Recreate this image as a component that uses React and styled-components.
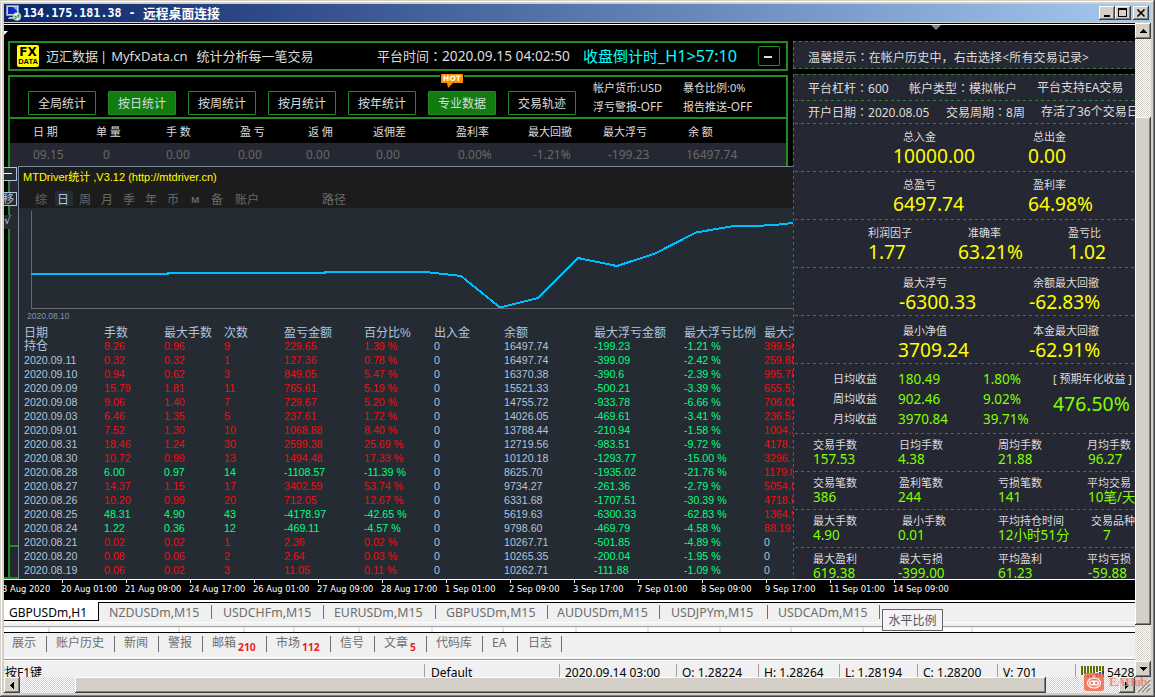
import React from "react";
import styled, { createGlobalStyle, css } from "styled-components";

const tabs = [
  ["NZDUSDm,M15", 112, 10],
  ["USDCHFm,M15", 112, 11],
  ["EURUSDm,M15", 112, 10],
  ["GBPUSDm,M15", 112, 10],
  ["AUDUSDm,M15", 112, 9],
  ["USDJPYm,M15", 108, 11],
  ["USDCADm,M15", 112, 10],
];

const terminalTabs = [
  ["展示", 43, 8],
  ["账户历史", 68, 9],
  ["新闻", 44, 9],
  ["警报", 44, 9],
  ["邮箱", 64, 9, "210"],
  ["市场", 64, 9, "112"],
  ["信号", 44, 9],
  ["文章", 52, 9, "5"],
  ["代码库", 56, 9],
  ["EA", 35, 9],
  ["日志", 44, 10],
];

const statusCells = [
  ["Default", 135],
  ["2020.09.14 03:00", 117],
  ["O: 1.28224", 82],
  ["H: 1.28264", 81],
  ["L: 1.28194", 78],
  ["C: 1.28200", 80],
  ["V: 701", 78],
];

const times = [
  "20 Aug 01:00", "21 Aug 09:00", "24 Aug 17:00", "26 Aug 01:00", "27 Aug 09:00",
  "28 Aug 17:00", "1 Sep 01:00", "2 Sep 09:00", "3 Sep 17:00", "7 Sep 01:00",
  "8 Sep 09:00", "9 Sep 17:00", "11 Sep 01:00", "14 Sep 09:00",
];

const buttons = ["全局统计", "按日统计", "按周统计", "按月统计", "按年统计", "专业数据", "交易轨迹"];
const activeButtons = ["按日统计", "专业数据"];

const summaryHead = ["日 期", "单 量", "手 数", "盈 亏", "返 佣", "返佣差", "盈利率", "最大回撤", "最大浮亏", "余 额"];
const summaryRow = ["09.15", "0", "0.00", "0.00", "0.00", "0.00", "0.00%", "-1.21%", "-199.23", "16497.74"];

const historyHead = ["日期", "手数", "最大手数", "次数", "盈亏金额", "百分比%", "出入金", "余额", "最大浮亏金额", "最大浮亏比例", "最大浮盈金额"];
const history = [
  ["持仓", "8.26", "0.96", "9", "229.65", "1.39 %", "0", "16497.74", "-199.23", "-1.21 %", "399.56"],
  ["2020.09.11", "0.32", "0.32", "1", "127.36", "0.78 %", "0", "16497.74", "-399.09", "-2.42 %", "259.88"],
  ["2020.09.10", "0.94", "0.62", "3", "849.05", "5.47 %", "0", "16370.38", "-390.6", "-2.39 %", "995.78"],
  ["2020.09.09", "15.79", "1.81", "11", "765.61", "5.19 %", "0", "15521.33", "-500.21", "-3.39 %", "655.51"],
  ["2020.09.08", "9.06", "1.40", "7", "729.67", "5.20 %", "0", "14755.72", "-933.78", "-6.66 %", "706.08"],
  ["2020.09.03", "6.46", "1.35", "5", "237.61", "1.72 %", "0", "14026.05", "-469.61", "-3.41 %", "236.52"],
  ["2020.09.01", "7.52", "1.30", "10", "1068.88", "8.40 %", "0", "13788.44", "-210.94", "-1.58 %", "1004.20"],
  ["2020.08.31", "18.46", "1.24", "30", "2599.38", "25.69 %", "0", "12719.56", "-983.51", "-9.72 %", "4178.10"],
  ["2020.08.30", "10.72", "0.99", "13", "1494.48", "17.33 %", "0", "10120.18", "-1293.77", "-15.00 %", "3296.15"],
  ["2020.08.28", "6.00", "0.97", "14", "-1108.57", "-11.39 %", "0", "8625.70", "-1935.02", "-21.76 %", "1179.04"],
  ["2020.08.27", "14.37", "1.15", "17", "3402.59", "53.74 %", "0", "9734.27", "-261.36", "-2.79 %", "5054.66"],
  ["2020.08.26", "10.20", "0.99", "20", "712.05", "12.67 %", "0", "6331.68", "-1707.51", "-30.39 %", "4718.00"],
  ["2020.08.25", "48.31", "4.90", "43", "-4178.97", "-42.65 %", "0", "5619.63", "-6300.33", "-62.83 %", "1364.99"],
  ["2020.08.24", "1.22", "0.36", "12", "-469.11", "-4.57 %", "0", "9798.60", "-469.79", "-4.58 %", "88.19"],
  ["2020.08.21", "0.02", "0.02", "1", "2.36", "0.02 %", "0", "10267.71", "-501.85", "-4.89 %", "0"],
  ["2020.08.20", "0.08", "0.06", "2", "2.64", "0.03 %", "0", "10265.35", "-200.04", "-1.95 %", "0"],
  ["2020.08.19", "0.06", "0.02", "3", "11.05", "0.11 %", "0", "10262.71", "-111.88", "-1.09 %", "0"],
];

const RED = "#f70a0e";
const GREEN = "#00ff7f";
const STEEL = "#b0c4de";

// profit columns follow the sign of the day, drawdown columns are always green
function cellColor(row, i) {
  if (i >= 1 && i <= 5) return row[4].startsWith("-") ? GREEN : RED;
  if (i === 8 || i === 9) return GREEN;
  if (i === 10) return row[10] === "0" ? STEEL : RED;
  return STEEL;
}

// [left padding, widths, texts] for the label line and the value line
const bigStats = [
  { labels: [109, [130], ["总入金", "总出金"]], values: [99, [135], ["10000.00", "0.00"]] },
  { labels: [109, [130], ["总盈亏", "盈利率"]], values: [99, [135], ["6497.74", "64.98%"]] },
  { labels: [74, [100, 100], ["利润因子", "准确率", "盈亏比"]], values: [74, [90, 110], ["1.77", "63.21%", "1.02"]] },
  { low: true, labels: [109, [130], ["最大浮亏", "余额最大回撤"]], values: [105, [130], ["-6300.33", "-62.83%"]] },
  { low: true, labels: [109, [130], ["最小净值", "本金最大回撤"]], values: [104, [131], ["3709.24", "-62.91%"]] },
];

const averages = [
  ["日均收益", "180.49", "1.80%"],
  ["周均收益", "902.46", "9.02%"],
  ["月均收益", "3970.84", "39.71%"],
];

const smallStats = [
  { labels: [19, [86, 99, 89], ["交易手数", "日均手数", "周均手数", "月均手数"]], values: ["157.53", "4.38", "21.88", "96.27"] },
  { labels: [19, [86, 99, 89], ["交易笔数", "盈利笔数", "亏损笔数", "平均交易"]], values: ["386", "244", "141", "10笔/天"] },
  { labels: [19, [89, 96, 93], ["最大手数", "最小手数", "平均持仓时间", "交易品种"]], values: ["4.90", "0.01", "12小时51分", "7"], shift: 15 },
  { labels: [19, [86, 99, 89], ["最大盈利", "最大亏损", "平均盈利", "平均亏损"]], values: ["619.38", "-399.00", "61.23", "-59.88"] },
];

function Arrow({ dir }) {
  const points = { up: "0,4 7,4 3.5,0", down: "0,0 7,0 3.5,4", left: "4,0 4,7 0,3.5", right: "0,0 0,7 4,3.5" };
  const flat = dir === "up" || dir === "down";
  return (
    <svg width={flat ? 7 : 4} height={flat ? 4 : 7} shapeRendering="crispEdges">
      <polygon points={points[dir]} fill="#000" />
    </svg>
  );
}

function StatLine({ as: Line, data }) {
  const [pad, widths, texts] = data;
  return (
    <Line $pad={pad} $widths={widths}>
      {texts.map((t, i) => (
        <span key={i}>{t}</span>
      ))}
    </Line>
  );
}

// name and value joined by a centred full-width colon
function Pair({ name, children }) {
  return (
    <span>
      {name}
      <Colon>：</Colon>
      {children}
    </span>
  );
}

function TitleBar() {
  return (
    <TitleRow>
      <svg width="17" height="18" viewBox="0 0 17 18">
        <rect x="1.5" y="1.5" width="12" height="10" fill="#c9cdd8" stroke="#8f96a8" />
        <rect x="3" y="3" width="9" height="7" fill="#0a2bc8" />
        <path d="M8 3h4v4z" fill="#7fa6ff" />
        <path d="M4 13h7v2H3z" fill="#b5b9c4" />
        <circle cx="12" cy="12.5" r="4" fill="#e7efe6" stroke="#9aa79a" strokeWidth=".6" />
        <path d="M9.5 12l2 1.5-2 1.5M14.5 10.5l-2 1.5 2 1.5" fill="none" stroke="#1d9a2a" strokeWidth="1.2" />
      </svg>
      <HostText>134.175.181.38 - </HostText>
      <TitleText>远程桌面连接</TitleText>
      <WindowButtons>
        <CaptionButton>
          <svg width="10" height="10" shapeRendering="crispEdges"><rect x="2" y="7" width="6" height="2" /></svg>
        </CaptionButton>
        <CaptionButton>
          <svg width="10" height="10" shapeRendering="crispEdges">
            <path d="M0 0h9v9H0zM1 2v6h7V2z" fillRule="evenodd" />
          </svg>
        </CaptionButton>
        <CaptionButton $gap>
          <svg width="10" height="10"><path d="M1.5 1.5l7 7M8.5 1.5l-7 7" stroke="#000" strokeWidth="1.6" /></svg>
        </CaptionButton>
      </WindowButtons>
    </TitleRow>
  );
}

function Summary() {
  return (
    <SummaryBox>
      <HotBadge>
        HOT
        <svg width="6" height="5"><path d="M0 0h6L1 5z" fill="#ff8a00" /></svg>
      </HotBadge>
      <ButtonRow>
        {buttons.map((b) => (
          <StatButton key={b} $active={activeButtons.includes(b)}>{b}</StatButton>
        ))}
        <AccountInfo>
          <span>帐户货币:USD</span>
          <span>暴仓比例:0%</span>
          <span>浮亏警报<em>-OFF</em></span>
          <span>报告推送<em>-OFF</em></span>
        </AccountInfo>
      </ButtonRow>
      <SummaryHead>{summaryHead.map((h) => <span key={h}>{h}</span>)}</SummaryHead>
      <SummaryValues>{summaryRow.map((v, i) => <span key={i}>{v}</span>)}</SummaryValues>
    </SummaryBox>
  );
}

function Driver() {
  return (
    <DriverRow>
      <DriverSide>
        <SideButton $top={1}><i /></SideButton>
        <SideButton $top={26}>移</SideButton>
        <SideButton $top={49} $plain>√</SideButton>
        <SideLine />
      </DriverSide>
      <DriverPanel>
        <DriverTop>
          <DriverTitle>MTDriver统计 ,V3.12 (http://mtdriver.cn)</DriverTitle>
          <PeriodRow>
            <span>综</span>
            <span className="on">日</span>
            <span>周</span>
            <span>月</span>
            <span>季</span>
            <span>年</span>
            <span>币</span>
            <span className="m">M</span>
            <span>备</span>
            <span>账户</span>
            <span>路径</span>
          </PeriodRow>
        </DriverTop>
        <Curve width="774" height="102" viewBox="19 208 774 102">
          <path d="M31.5 211V308.5H793" fill="none" stroke="#696969" />
          <path
            d="M31 274H168V273H325V272H426L461 276L500 307.5L538 298L578 258L617 266L655 253.5L696 232.5L732 226.3L753 226L775 225L793 223"
            fill="none"
            stroke="#00bfff"
            strokeWidth="2"
          />
        </Curve>
        <StartDate>2020.08.10</StartDate>
        <HistoryHead>{historyHead.map((h) => <span key={h}>{h}</span>)}</HistoryHead>
        {history.map((row) => (
          <HistoryRow key={row[0]}>
            {row.map((v, i) => <HistoryCell key={i} $color={cellColor(row, i)}>{v}</HistoryCell>)}
          </HistoryRow>
        ))}
      </DriverPanel>
    </DriverRow>
  );
}

function AccountPanel() {
  return (
    <RightColumn>
      <Notice>
        <Pair name="温馨提示">在帐户历史中，右击选择&lt;所有交易记录&gt;</Pair>
      </Notice>
      <Account>
        <InfoLine $height={26} $widths={[101, 128]}>
          <Pair name="平台杠杆">600</Pair>
          <Pair name="帐户类型">模拟帐户</Pair>
          <span>平台支持EA交易</span>
        </InfoLine>
        <InfoLine $height={23} $widths={[138, 95]}>
          <Pair name="开户日期">2020.08.05</Pair>
          <Pair name="交易周期">8周</Pair>
          <span>存活了36个交易日</span>
        </InfoLine>
        {bigStats.map((s, i) => (
          <BigSection key={i} $low={s.low}>
            <StatLine as={LabelLine} data={s.labels} />
            <StatLine as={BigLine} data={s.values} />
          </BigSection>
        ))}
        <AverageSection>
          <div>
            {averages.map(([name, money, pct]) => (
              <AverageRow key={name}>
                <b>{name}</b>
                <span>{money}</span>
                <span>{pct}</span>
              </AverageRow>
            ))}
          </div>
          <Forecast>
            <b>[ 预期年化收益 ]</b>
            <span>476.50%</span>
          </Forecast>
        </AverageSection>
        {smallStats.map((s, i) => (
          <SmallSection key={i}>
            <StatLine as={SmallLabelLine} data={s.labels} />
            <StatLine as={SmallValueLine} data={[19, [85, 100, 90 + (s.shift || 0)], s.values]} />
          </SmallSection>
        ))}
      </Account>
    </RightColumn>
  );
}

function App() {
  return (
    <Window>
      <GlobalStyle />
      <TitleBar />
      <Main>
        <Screen>
          <ChartArea>
            <LeftColumn>
              <TopStrip>
                <svg width="4" height="4"><path d="M0 0h4L0 4z" fill="#fff" /></svg>
              </TopStrip>
              <Header>
                <Logo>
                  <b>FX</b>
                  <span>DATA</span>
                </Logo>
                <Brand>迈汇数据</Brand>
                <Brand $left={2}>|</Brand>
                <Brand $left={4}>MyfxData.cn</Brand>
                <Brand $left={9}>统计分析每一笔交易</Brand>
                <Clock>
                  <Pair name="平台时间"><em>2020.09.15 04:02:50</em></Pair>
                </Clock>
                <Countdown>收盘倒计时<em>_H1&gt;57:10</em></Countdown>
                <MinusButton />
              </Header>
              <Summary />
              <Driver />
            </LeftColumn>
            <AccountPanel />
          </ChartArea>
          <TimeAxis>
            <FirstTime>3 Aug 2020</FirstTime>
            {times.map((t) => <TimeMark key={t}>{t}</TimeMark>)}
          </TimeAxis>
          <SymbolTabs>
            <ActiveTab>GBPUSDm,H1</ActiveTab>
            {tabs.map(([name, width, pad], i) => (
              <SymbolTab key={name} $width={i === 0 ? width + 1 : width} $pad={pad}>{name}</SymbolTab>
            ))}
            <Tooltip>水平比例</Tooltip>
          </SymbolTabs>
          <CellStrip>
            {[46, 130, 65, 50, 65, 73, 71, 73, 72, 72, 71, 72, 109].map((w, i) => <StripCell key={i} $width={w} />)}
          </CellStrip>
          <TerminalTabs>
            {terminalTabs.map(([name, width, pad, count]) => (
              <TerminalTab key={name} $width={width} $pad={pad}>
                {name}
                {count && <b>{count}</b>}
              </TerminalTab>
            ))}
          </TerminalTabs>
          <StatusBar>
            <HelpText>请按F1键</HelpText>
            {statusCells.map(([text, width], i) => (
              <StatusCell key={text} $width={width} $pad={i === 0 ? 7 : 6}>{text}</StatusCell>
            ))}
            <StatusCell $width={60} $pad={7}>
              <svg width="24" height="12" shapeRendering="crispEdges">
                {[0, 3, 6, 9, 12, 15, 18, 21].map((x, i) => (
                  <g key={x}>
                    <rect x={x} y="0" width="2" height={9 - i * 0.6} fill="#5a7300" />
                    <rect x={x} y={11 - i * 0.8} width="2" height="6" fill="#123f66" />
                  </g>
                ))}
              </svg>
              5428
            </StatusCell>
          </StatusBar>
        </Screen>
        <VerticalScroll>
          <ScrollButton><Arrow dir="up" /></ScrollButton>
          <Thumb $top={78} $height={508} />
          <ScrollButton><Arrow dir="down" /></ScrollButton>
        </VerticalScroll>
      </Main>
      <HorizontalScroll>
        <ScrollButton><Arrow dir="left" /></ScrollButton>
        <Thumb $left={55} $width={971} />
        <ScrollButton><Arrow dir="right" /></ScrollButton>
        <Grip width="16" height="16">
          <path d="M3 15L15 3M7 15l8-8M11 15l4-4" stroke="#808080" strokeWidth="1.6" />
          <path d="M1.5 15L15 1.5M5.5 15L15 5.5M9.5 15L15 9.5" stroke="#fff" />
        </Grip>
      </HorizontalScroll>
      <Watermark>
        <svg width="20" height="20" viewBox="0 0 20 20">
          <rect x="0" y="1" width="20" height="18" rx="3" fill="#f5694f" />
          <path d="M10 5.500V3" stroke="#fff" strokeWidth="1.300" />
          <ellipse cx="10" cy="11" rx="6.500" ry="5" fill="none" stroke="#fff" strokeWidth="1.200" />
          <rect x="5" y="8.500" width="10" height="5" rx="2.500" fill="#fff" />
          <circle cx="7.700" cy="11" r="1.300" fill="#f5694f" />
          <circle cx="12.300" cy="11" r="1.300" fill="#f5694f" />
        </svg>
        EAHub
      </Watermark>
    </Window>
  );
}

export default App;

const GlobalStyle = createGlobalStyle`
  * {
    box-sizing: border-box;
  }

  body {
    margin: 0;
    overflow: hidden;
    font-family: "Noto Sans", "Noto Sans CJK SC", sans-serif;
  }

  svg {
    display: block;
    flex: none;
  }

  em, i {
    font-style: normal;
  }
`;

const panel = "#252732";
const arial = `"Liberation Sans", "Noto Sans CJK SC", sans-serif`;
const px = (widths) => widths.map((w) => `${w}px`).join(" ") + " auto";

const dashX = `repeating-linear-gradient(90deg, #228b22 0 3px, transparent 3px 6px)`;
const dashY = `repeating-linear-gradient(180deg, #228b22 0 3px, transparent 3px 6px)`;

const bevel = css`
  background: #d4d0c8;
  box-shadow: inset -1px -1px #404040, inset 1px 1px #fff, inset -2px -2px #808080;
`;

const Colon = styled.span`
  font-family: "Noto Sans CJK TC", sans-serif;
`;

const Window = styled.div`
  position: relative;
  width: 1155px;
  height: 697px;
  padding: 4px;
  background: #d4d0c8;
  box-shadow: inset -1px -1px #404040, inset 0 1px #d4d0c8, inset 1px 0 #d4d0c8, inset -2px -2px #808080, inset 2px 2px #fff;
  display: flex;
  flex-direction: column;
  overflow: hidden;
  white-space: nowrap;
`;

const TitleRow = styled.div`
  height: 18px;
  display: flex;
  align-items: center;
  padding-left: 1px;
  background: linear-gradient(90deg, #0a246a, #a6caf0);
  color: #fff;
  font-weight: bold;
`;

const HostText = styled.span`
  margin-left: 1px;
  width: 120px;
  font-family: "DejaVu Sans Mono", monospace;
  font-size: 11.7px;
  line-height: 18px;
`;

const TitleText = styled.span`
  font-family: "Noto Sans CJK SC", sans-serif;
  font-size: 12.8px;
  line-height: 18px;
`;

const WindowButtons = styled.div`
  display: flex;
  margin-left: auto;
  padding-right: 2px;
`;

const CaptionButton = styled.div`
  ${bevel}
  width: 16px;
  height: 14px;
  margin-left: ${(p) => (p.$gap ? 2 : 0)}px;
  padding: 2px 0 0 3px;
`;

const Main = styled.div`
  display: flex;
  height: 655px;
`;

const Screen = styled.div`
  width: 1131px;
  margin-top: 1px;
  border-top: 1px solid #000;
  overflow: hidden;
`;

const ChartArea = styled.div`
  display: flex;
  height: 555px;
  border-top: 1px solid #fff;
  background: #000;
`;

const LeftColumn = styled.div`
  width: 789px;
`;

const TopStrip = styled.div`
  height: 16px;
  padding-top: 6px;
`;

const Header = styled.div`
  height: 30px;
  width: 780px;
  margin-left: 4px;
  padding-left: 7px;
  display: flex;
  align-items: center;
  border: 2px solid #228b22;
  color: #dcdcdc;
  line-height: 24px;
`;

const Logo = styled.div`
  width: 22px;
  height: 22px;
  border-radius: 2px;
  background: #ffff00;
  color: #000;
  text-align: center;
  overflow: hidden;

  b,
  span {
    display: block;
    font-weight: bold;
  }

  b {
    font: bold 12px/12px "DejaVu Sans", sans-serif;
    margin-top: 1px;
  }

  span {
    font: bold 7.5px/7px "Liberation Sans", sans-serif;
  }
`;

const Brand = styled.span`
  margin-left: ${(p) => p.$left || 7}px;
  font-size: 13px;
`;

const Clock = styled.span`
  width: 206px;
  margin-left: auto;
  font-size: 13px;

  em {
    font-size: 13.7px;
  }
`;

const Countdown = styled.span`
  width: 175px;
  color: #00ffff;
  font-size: 15px;

  em {
    font-size: 16.2px;
  }
`;

const MinusButton = styled.div`
  width: 22px;
  height: 20px;
  margin-right: 6px;
  padding: 9px 0 0 5px;
  border: 1px solid #228b22;
  border-radius: 1px;

  &::before {
    content: "";
    display: block;
    width: 8px;
    height: 2px;
    background: #dcdcdc;
  }
`;

const SummaryBox = styled.div`
  position: relative;
  width: 780px;
  height: 91px;
  margin: 4px 0 0 4px;
  border: 2px solid #228b22;
  border-bottom: none;
`;

const HotBadge = styled.div`
  position: absolute;
  left: 431px;
  top: -3px;
  width: 22px;
  height: 9px;
  background: #ff9000;
  box-shadow: 0 0 0 1px #000;
  border-radius: 1px;
  color: #fff;
  font: bold 7.5px/9px "DejaVu Sans", sans-serif;
  text-align: center;

  svg {
    margin-left: 6px;
  }
`;

const ButtonRow = styled.div`
  display: flex;
  gap: 12px;
  height: 42px;
  padding: 14px 0 0 18px;
  border-bottom: 2px solid #228b22;
`;

const StatButton = styled.div`
  flex: none;
  width: 68px;
  height: 24px;
  border: 1px solid #228b22;
  border-radius: 1px;
  background: ${(p) => (p.$active ? "#107c10" : "#000")};
  color: #dcdcdc;
  font-size: 12px;
  line-height: 23px;
  text-align: center;
`;

const AccountInfo = styled.div`
  display: grid;
  grid-template-columns: 90px auto;
  margin: -12px 0 0 5px;
  color: #dcdcdc;
  font-size: 11px;
  line-height: 18px;
  height: 36px;

  em {
    font-size: 11.8px;
  }
`;

const SummaryHead = styled.div`
  display: grid;
  grid-template-columns: ${px([63, 70, 74, 68, 65, 83, 72, 75, 85])};
  height: 24px;
  padding-left: 23px;
  color: #dcdcdc;
  font-size: 11px;
  line-height: 25px;
`;

const SummaryValues = styled.div`
  display: grid;
  grid-template-columns: ${px([70, 63, 72, 68, 70, 82, 75, 75, 78])};
  height: 23px;
  padding-left: 23px;
  background: ${panel};
  color: #696969;
  font-size: 12px;
  line-height: 23px;
`;

const DriverRow = styled.div`
  display: flex;
  height: 413px;
`;

const DriverSide = styled.div`
  position: relative;
  width: 14px;
  padding-left: 6px;
  background: linear-gradient(90deg, #000 4px, #228b22 4px 6px, ${panel} 6px);
  border-bottom: 2px solid #228b22;
  overflow: hidden;
`;

// controls of the hidden half of the panel, stacked over the frame line
const SideButton = styled.div`
  position: absolute;
  left: -3px;
  top: ${(p) => p.$top}px;
  width: 16px;
  height: 14px;
  padding-left: ${(p) => (p.$plain ? 3 : 1)}px;
  border: ${(p) => (p.$plain ? "none" : `1px solid ${STEEL}`)};
  background: #252b33;
  color: ${STEEL};
  font-family: ${(p) => (p.$plain ? `"DejaVu Sans", sans-serif` : "inherit")};
  font-size: 11px;
  line-height: 12px;

  i {
    display: block;
    width: 9px;
    height: 1px;
    margin-top: 5px;
    background: #fff;
  }
`;

const SideLine = styled.div`
  position: absolute;
  left: 4px;
  right: 0;
  top: 379px;
  height: 2px;
  background: #228b22;
`;

const DriverPanel = styled.div`
  width: 775px;
  border: 1px solid #778899;
  border-right: none;
  border-bottom: none;
  background: #252b33;
  overflow: hidden;
`;

const DriverTop = styled.div`
  height: 41px;
  background: #1c1c1c;
`;

const DriverTitle = styled.div`
  padding: 1px 0 0 4px;
  height: 24px;
  color: #ffff00;
  font-family: ${arial};
  font-size: 11px;
  line-height: 19px;
`;

const PeriodRow = styled.div`
  display: flex;
  height: 15px;
  padding-left: 14px;
  color: #696969;
  font-size: 12px;
  line-height: 17px;

  span {
    width: 22px;
    padding-left: 2px;
  }

  .on {
    width: 18px;
    margin-right: 4px;
    background: #252b33;
    color: ${STEEL};
    padding-left: 2px;
  }

  .m {
    font-size: 9px;
    padding-left: 4px;
    font-weight: bold;
  }

  span:nth-child(10) {
    margin-left: 2px;
    width: 87px;
  }
`;

const Curve = styled.svg`
  shape-rendering: crispEdges;
`;

const StartDate = styled.div`
  height: 15px;
  padding-left: 8px;
  color: #8494a6;
  font-family: ${arial};
  font-size: 8.5px;
  line-height: 12px;
`;

const historyGrid = css`
  display: grid;
  grid-template-columns: ${px([80, 60, 60, 60, 80, 70, 70, 90, 90, 80])};
  padding-left: 5px;
  font-family: ${arial};
`;

const HistoryHead = styled.div`
  ${historyGrid}
  height: 14px;
  color: ${STEEL};
  font-size: 12px;
  line-height: 16px;
`;

const HistoryRow = styled.div`
  ${historyGrid}
  height: 14px;
  font-size: 10.67px;
  line-height: 14px;

  &:nth-of-type(4) span:first-child {
    font-size: 12px;
  }
`;

const HistoryCell = styled.span`
  color: ${(p) => p.$color};
`;

const RightColumn = styled.div`
  width: 342px;
  padding-top: 16px;
  background: #000;
  position: relative;
  overflow: hidden;

  &::before {
    content: "";
    position: absolute;
    left: 138px;
    top: 0;
    border: 5px solid transparent;
    border-top-color: #778899;
    border-bottom: none;
  }
`;

const Notice = styled.div`
  height: 28px;
  padding-left: 15px;
  background: ${dashX} 0 0 / 100% 1px no-repeat, ${dashX} 0 100% / 100% 1px no-repeat, ${dashY} 0 0 / 1px 100% no-repeat, ${panel};
  color: #dcdcdc;
  font-size: 12px;
  letter-spacing: 0.14px;
  line-height: 31px;
`;

const Account = styled.div`
  height: 505px;
  margin-top: 5px;
  background: ${dashY} 0 0 / 1px 100% no-repeat, ${panel};
  overflow: hidden;
`;

const section = css`
  background: ${dashX} 2px 0 / 100% 1px no-repeat;
`;

const InfoLine = styled.div`
  ${section}
  display: grid;
  grid-template-columns: ${(p) => px(p.$widths)};
  height: ${(p) => p.$height}px;
  padding-left: 15px;
  color: #dcdcdc;
  font-size: 12px;
  line-height: ${(p) => p.$height + 1}px;
`;

const BigSection = styled.div`
  ${section}
  height: 48px;
  padding-top: ${(p) => (p.$low ? 7 : 5)}px;
`;

const line = css`
  display: grid;
  grid-template-columns: ${(p) => px(p.$widths)};
  padding-left: ${(p) => p.$pad + 1}px;
`;

const LabelLine = styled.div`
  ${line}
  color: #dcdcdc;
  font-size: 11px;
  line-height: 18px;
`;

const BigLine = styled.div`
  ${line}
  color: #ffff00;
  font-size: 19.2px;
  line-height: 20px;
`;

const AverageSection = styled.div`
  ${section}
  display: flex;
  height: 70px;
  padding: 6px 0 0 40px;

  b {
    color: #dcdcdc;
    font-size: 11px;
    font-weight: normal;
  }
`;

const AverageRow = styled.div`
  display: grid;
  grid-template-columns: 65px 85px 70px;
  height: 20px;
  color: #7fff00;
  font-size: 13.5px;
  line-height: 20px;
`;

const Forecast = styled.div`
  display: flex;
  flex-direction: column;
  line-height: 20px;

  span {
    color: #7fff00;
    font-size: 19.4px;
    line-height: 30px;
  }
`;

const SmallSection = styled.div`
  ${section}
  height: 38px;
  padding-top: 4px;
`;

const SmallLabelLine = styled.div`
  ${line}
  color: #dcdcdc;
  font-size: 11px;
  line-height: 16px;
`;

const SmallValueLine = styled.div`
  ${line}
  color: #7fff00;
  font-size: 13.5px;
  line-height: 12px;
`;

const TimeAxis = styled.div`
  display: flex;
  height: 21px;
  border-top: 1px solid #fff;
  background: #000;
  color: #fff;
  font-family: "DejaVu Sans Condensed", "DejaVu Sans", sans-serif;
  font-size: 9.3px;
  line-height: 18px;
`;

const FirstTime = styled.span`
  width: 58px;
  text-indent: -2px;
`;

const TimeMark = styled.span`
  width: 64px;
  flex: none;
  text-indent: -1px;
  background: linear-gradient(#fff, #fff) 0 0 / 1px 3px no-repeat;
`;

const SymbolTabs = styled.div`
  position: relative;
  display: flex;
  height: 27px;
  border-top: 2px solid #fff;
  border-bottom: 1px solid #a0a0a0;
  background: linear-gradient(#000 1px, #f0f0f0 1px 20px, #fff 20px 21px, #f0f0f0 21px);
  color: #6d6d6d;
  font-size: 12px;
  line-height: 21px;
`;

const ActiveTab = styled.div`
  width: 95px;
  height: 19px;
  padding-left: 5px;
  border-right: 1px solid #000;
  border-bottom: 1px solid #000;
  background: #fff;
  color: #000;
`;

const SymbolTab = styled.div`
  width: ${(p) => p.$width}px;
  padding-left: ${(p) => p.$pad}px;
  background: linear-gradient(#6d6d6d, #6d6d6d) 100% 3px / 1px 14px no-repeat;
  font-size: 12.35px;
`;

const Tooltip = styled.div`
  position: absolute;
  left: 878px;
  top: 7px;
  width: 61px;
  height: 22px;
  border: 1px solid #646464;
  background: #f3f3f8;
  color: #575757;
  text-align: center;
`;

const CellStrip = styled.div`
  display: flex;
  height: 6px;
  border-bottom: 1px solid #000;
  background: linear-gradient(#f0f0f0 1px, #fff 1px);
`;

const StripCell = styled.div`
  width: ${(p) => p.$width}px;
  border-right: 2px solid #e3e3e3;
`;

const TerminalTabs = styled.div`
  display: flex;
  height: 27px;
  border-bottom: 1px solid #a0a0a0;
  background: linear-gradient(#f0f0f0 24px, #fff 24px 25px, #f0f0f0 25px);
  color: #6d6d6d;
  font-size: 12px;
  line-height: 20px;
`;

const TerminalTab = styled.div`
  width: ${(p) => p.$width}px;
  padding-left: ${(p) => p.$pad}px;
  background: linear-gradient(#6d6d6d, #6d6d6d) 100% 3px / 1px 16px no-repeat;

  b {
    display: inline-block;
    margin-left: 2px;
    color: #ed1c24;
    font-size: 10.3px;
    line-height: 12px;
    transform: translateY(4px);
  }
`;

const StatusBar = styled.div`
  display: flex;
  height: 20px;
  border-top: 1px solid #fff;
  background: #f0f0f0;
  color: #000;
  font-size: 12px;
  line-height: 24px;
`;

const HelpText = styled.div`
  width: 420px;
  text-indent: -11px;
`;

const StatusCell = styled.div`
  display: flex;
  flex: none;
  width: ${(p) => p.$width}px;
  padding-left: ${(p) => p.$pad}px;
  background: linear-gradient(#a0a0a0, #a0a0a0) 0 3px / 1px 16px no-repeat;

  svg {
    margin: 5px 2px 0 -1px;
  }
`;

const track = css`
  background: repeating-conic-gradient(#fff 0 25%, #d4d0c8 0 50%) 0 0 / 2px 2px;
`;

const VerticalScroll = styled.div`
  ${track}
  display: flex;
  flex-direction: column;
  width: 16px;
  margin-top: 1px;

  & > :last-child {
    margin-top: auto;
  }
`;

const HorizontalScroll = styled.div`
  ${track}
  display: flex;
  height: 16px;

  & > :nth-child(3) {
    margin-left: auto;
  }
`;

const ScrollButton = styled.div`
  ${bevel}
  display: flex;
  align-items: center;
  justify-content: center;
  flex: none;
  width: 16px;
  height: 16px;
`;

const Thumb = styled.div`
  ${bevel}
  width: ${(p) => p.$width || 16}px;
  height: ${(p) => p.$height || 16}px;
  margin-left: ${(p) => p.$left || 0}px;
  margin-top: ${(p) => p.$top || 0}px;
`;

const Grip = styled.svg`
  background: #d4d0c8;
`;

const Watermark = styled.div`
  position: absolute;
  left: 1084px;
  top: 672px;
  display: flex;
  gap: 5px;
  align-items: center;
  color: #f0806a;
  font: bold 12.5px/20px "Liberation Serif", serif;
  letter-spacing: -0.7px;
  opacity: 0.85;
`;
